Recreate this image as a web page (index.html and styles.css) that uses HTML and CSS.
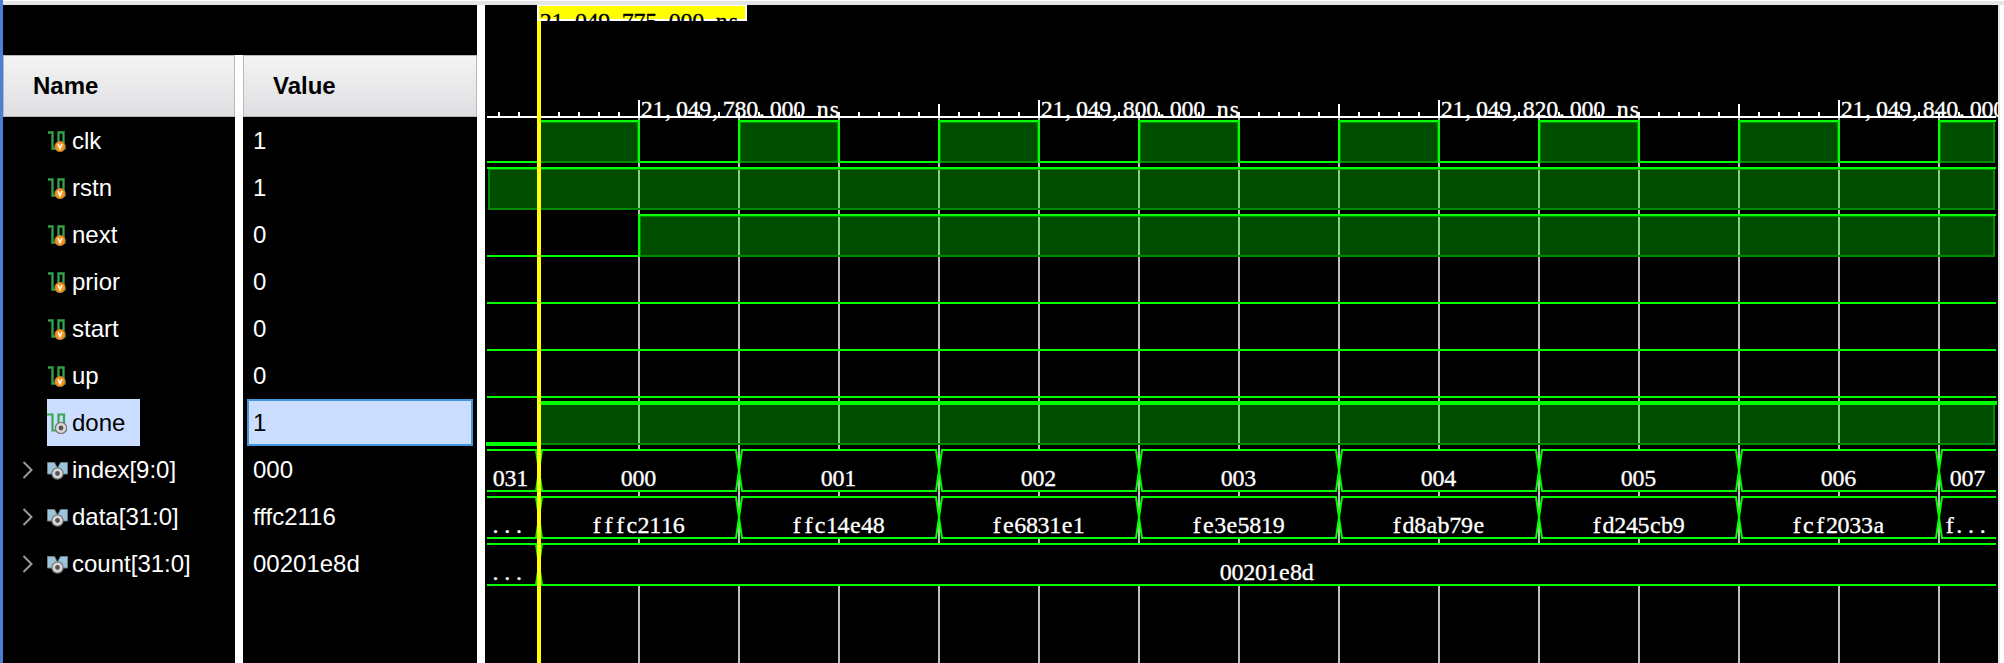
FILE: index.html
```
<!DOCTYPE html>
<html lang="en">
<head>
<meta charset="utf-8">
<title>Waveform</title>
<link rel="stylesheet" href="styles.css">
</head>
<body>
<svg class="defs" width="0" height="0">
  <symbol id="sig" viewBox="0 0 20 22">
    <path d="M1 2.5H5.5V18.5H11.5V2.5H16.5V18.5H18.5" fill="none" stroke="#1f6b2e" stroke-width="2.8"/>
    <path d="M1 2.5H5.5V18.5H11.5V2.5H16.5V18.5H18.5" fill="none" stroke="#35a24b" stroke-width="1.4"/>
  </symbol>
  <symbol id="input" viewBox="0 0 20 22">
    <use href="#sig" width="20" height="22"/>
    <circle cx="13" cy="16.5" r="5.2" fill="#f7941d" stroke="#a5733c" stroke-width="1"/>
    <path d="M11 14L13 18.6L15 14" fill="none" stroke="#fff" stroke-width="1.5"/>
  </symbol>
  <symbol id="output" viewBox="0 0 20 22">
    <path d="M0 2.5H5.5V18.5H11.5V2.5H17V18.5H20" fill="none" stroke="#3aa650" stroke-width="2.2"/>
    <circle cx="14" cy="16" r="5.6" fill="#d8d8d8" stroke="#777" stroke-width="1.2"/>
    <circle cx="14" cy="16" r="2.4" fill="#555"/>
  </symbol>
  <symbol id="bus" viewBox="0 0 21 20">
    <path d="M.5 2.5H7.5L10.5 8L13.5 2.5H20.5V14H.5Z" fill="#9cc5db" stroke="#6a7f8a" stroke-width="1"/>
    <path d="M8 1H13L10.5 7Z" fill="#000"/>
    <circle cx="10.5" cy="13.5" r="5.6" fill="#d8d8d8" stroke="#777" stroke-width="1.2"/>
    <circle cx="10.5" cy="13.5" r="2.4" fill="#555"/>
  </symbol>
  <symbol id="arrow" viewBox="0 0 12 18">
    <path d="M1.5 1L9.5 9L1.5 17" fill="none" stroke="#9a9a9a" stroke-width="2"/>
  </symbol>
</svg>
<div class="window">
  <div class="topbar"></div>
  <div class="panes">
    <section class="column names">
      <header class="head">Name</header>
      <ul class="list">
        <li class="row"><span class="item"><svg class="icon"><use href="#input"/></svg>clk</span></li>
        <li class="row"><span class="item"><svg class="icon"><use href="#input"/></svg>rstn</span></li>
        <li class="row"><span class="item"><svg class="icon"><use href="#input"/></svg>next</span></li>
        <li class="row"><span class="item"><svg class="icon"><use href="#input"/></svg>prior</span></li>
        <li class="row"><span class="item"><svg class="icon"><use href="#input"/></svg>start</span></li>
        <li class="row"><span class="item"><svg class="icon"><use href="#input"/></svg>up</span></li>
        <li class="row"><span class="item selected"><svg class="icon"><use href="#output"/></svg>done</span></li>
        <li class="row"><svg class="arrow"><use href="#arrow"/></svg><span class="item"><svg class="icon bus"><use href="#bus"/></svg>index[9:0]</span></li>
        <li class="row"><svg class="arrow"><use href="#arrow"/></svg><span class="item"><svg class="icon bus"><use href="#bus"/></svg>data[31:0]</span></li>
        <li class="row"><svg class="arrow"><use href="#arrow"/></svg><span class="item"><svg class="icon bus"><use href="#bus"/></svg>count[31:0]</span></li>
      </ul>
    </section>
    <section class="column values">
      <header class="head">Value</header>
      <ul class="list">
        <li class="row"><span class="value">1</span></li>
        <li class="row"><span class="value">1</span></li>
        <li class="row"><span class="value">0</span></li>
        <li class="row"><span class="value">0</span></li>
        <li class="row"><span class="value">0</span></li>
        <li class="row"><span class="value">0</span></li>
        <li class="row"><span class="value selected">1</span></li>
        <li class="row"><span class="value">000</span></li>
        <li class="row"><span class="value">fffc2116</span></li>
        <li class="row"><span class="value">00201e8d</span></li>
      </ul>
    </section>
    <svg class="wave" id="wave" viewBox="485 5 1513 658"></svg>
    <div class="edge"></div>
  </div>
</div>
<script src="wave.js"></script>
</body>
</html>
```
FILE: styles.css
```
body {
  margin: 0;
  background: #fff;
  font-family: "Liberation Sans", Arial, sans-serif;
  font-size: 24px;
  color: #fff;
}
.defs { position: absolute; }
.window {
  box-sizing: border-box;
  width: 2004px;
  height: 663px;
  border-left: 3px solid #4a7fd4;
  overflow: hidden;
  display: flex;
  flex-direction: column;
}
.topbar {
  height: 4px;
  flex: none;
  background: #e5e5e5;
  border-top: 1px solid #fff;
}
.panes {
  flex: 1;
  display: flex;
  min-height: 0;
}
.column {
  flex: none;
  box-sizing: border-box;
  background: #000;
  padding-top: 50px;
}
.names { width: 232px; }
/* The gap between the two header cells starts below the black band. */
.values {
  width: 242px;
  border-left: 8px solid;
  border-image: linear-gradient(#000 50px, #fff 50px) 0 0 0 8;
}
.head {
  box-sizing: border-box;
  height: 62px;
  border: 1px solid #b8b8b8;
  background: linear-gradient(#f4f4f4, #dfdfe3);
  color: #000;
  font-weight: bold;
  line-height: 59px;
  padding-left: 29px;
}
.list {
  list-style: none;
  margin: 0;
  padding: 0;
}
.row {
  height: 47px;
  display: flex;
  align-items: center;
}
.names .row { padding-left: 19px; }
.item {
  box-sizing: border-box;
  height: 47px;
  line-height: 45px;
  margin-left: auto;
  width: 188px;
  display: flex;
  align-items: center;
}
.item.selected {
  width: 93px;
  margin-left: 25px;
  background: #ccdeff;
  color: #000;
}
.icon {
  width: 20px;
  height: 22px;
  margin-right: 5px;
  flex: none;
}
.icon.bus {
  width: 21px;
  height: 20px;
  margin-right: 4px;
}
.arrow {
  width: 12px;
  height: 18px;
  flex: none;
}
.value {
  box-sizing: border-box;
  width: 226px;
  height: 47px;
  line-height: 43px;
  margin-left: 4px;
  border: 2px solid transparent;
  padding-left: 4px;
}
.value.selected {
  background: #ccdeff;
  border-color: #4497d8;
  color: #000;
}
.wave {
  flex: none;
  width: 1513px;
  height: 658px;
  margin-left: 8px;
  background: #000;
}
.wave text {
  font-family: "Liberation Serif", serif;
  font-size: 24px;
  text-anchor: middle;
  fill: #fff;
  stroke: #fff;
  stroke-width: 0.3px;
}
.wave .cursor-time { fill: #000; stroke: #000; }
.edge {
  width: 2px;
  background: #e5e5e5;
}
```
FILE: wave.js
```
const NS = "http://www.w3.org/2000/svg";
const wave = document.getElementById("wave");
const LEFT = 487, RIGHT = 1996, CURSOR = 539, HALF = 100;
const GREEN = "#00ff00", FILL = "#004d00", RIM = "#008c00";

function add(tag, attrs, parent = wave) {
  const el = document.createElementNS(NS, tag);
  for (const k in attrs) el.setAttribute(k, attrs[k]);
  parent.appendChild(el);
  return el;
}
function rect(x, y, width, height, fill, extra) {
  return add("rect", { x, y, width, height, fill, ...extra });
}
// Fixed-pitch character cells; punctuation sits at the left of its cell.
const PITCH = 11.73;
function cells(str, start, y, cls, parent) {
  const xs = [...str].map((c, i) => (start + i * PITCH + (",.".includes(c) ? 3.5 : 5.7)).toFixed(2));
  const t = add("text", { x: xs.join(" "), y }, parent);
  if (cls) t.setAttribute("class", cls);
  t.textContent = str;
}

// Grid lines
for (let x = 638; x < RIGHT; x += HALF) rect(x, 118, 2, 545, "#bdbdbd");

// Ruler
rect(LEFT, 116, RIGHT - LEFT, 2, "#fff");
for (let i = 0; 498 + i * 20 < RIGHT; i++) {
  const x = 498 + i * 20;
  const k = (x - 638) / 100;
  const h = k % 4 === 0 ? 16 : k % 4 === 3 ? 12 : 4;
  rect(x, 116 - h, 2, h, "#fff");
}
["780", "800", "820", "840"].forEach((n, i) =>
  cells("21,049," + n + ".000 ns", 641 + i * 400, 117));

function high(x1, x2, top, opt = {}) {
  rect(x1, top, x2 - x1, 42, FILL);
  for (let x = 638; x < x2; x += HALF)
    if (x > x1 && x < x2 - 2) rect(x, top, 2, 42, "#84d084");
  rect(x1, top + 41, x2 - x1, 2, RIM);
  rect(x1, top + 2, x2 - x1, 1, RIM);
  if (opt.left) rect(x1, top + 2, 2, 41, RIM);
  if (opt.right) rect(x2 - 2, top + 2, 2, 41, RIM);
}

// clk
rect(LEFT, 161, CURSOR - LEFT, 2, GREEN);
for (let x = 538; x < RIGHT; x += 200) {
  const end = Math.min(x + HALF, RIGHT - 1);
  high(x + 1, end + (end < RIGHT - 1 ? 1 : 0), 120, { left: x > 538, right: true });
  rect(x, 120, Math.min(x + HALF + 2, RIGHT) - x, 2, GREEN);
  rect(x, 120, 2, 43, GREEN);
  if (x + HALF < RIGHT) {
    rect(x + HALF, 120, 2, 43, GREEN);
    rect(x + HALF, 161, HALF, 2, GREEN);
  }
}
// rstn
high(488, 1995, 167, { left: true, right: true });
rect(LEFT, 167, RIGHT - LEFT, 2, GREEN);
// next
high(639, 1995, 214, { left: true, right: true });
rect(LEFT, 255, 151, 2, GREEN);
rect(638, 214, 2, 43, GREEN);
rect(638, 214, RIGHT - 638, 2, GREEN);
// prior, start, up
[302, 349, 396].forEach(y => rect(LEFT, y, RIGHT - LEFT, 2, GREEN));
// done
high(CURSOR, 1995, 402, { right: true });
rect(486, 442, 53, 4, GREEN);
rect(CURSOR, 401, 1997 - CURSOR, 4, GREEN);

// Buses
function bus(top, labels, start, until) {
  const edges = [];
  for (let x = 539; x < until; x += 200) edges.push(x);
  rect(LEFT, top, RIGHT - LEFT, 43, "#000");
  const bounds = [LEFT - 4, ...edges, RIGHT + 4];
  for (const x of edges)
    if (x > 539) rect(x - 1, top, 2, 43, "#bdbdbd");
  for (let i = 0; i < bounds.length - 1; i++) {
    const a = bounds[i] + 4, b = bounds[i + 1] - 4;
    rect(a, top, b - a, 2, GREEN);
    rect(a, top + 41, b - a, 2, GREEN);
  }
  for (const x of edges)
    add("path", {
      d: `M${x - 4} ${top + 1}h1L${x + 3} ${top + 42}h1M${x + 4} ${top + 1}h-1L${x - 3} ${top + 42}h-1`,
      fill: "none", stroke: GREEN, "stroke-width": 2
    });
  labels.forEach((s, i) => cells(s, start[i], top + 37));
}
const idx = ["031"], idxX = [493];
for (let i = 0; i < 7; i++) { idx.push("00" + i); idxX.push(621 + i * 200); }
idx.push("007"); idxX.push(1950);
bus(449, idx, idxX, RIGHT);

const words = ["fffc2116", "ffc14e48", "fe6831e1", "fe3e5819", "fd8ab79e", "fd245cb9", "fcf2033a"];
bus(496, ["...", ...words, "f..."], [492, ...words.map((_, i) => 591 + i * 200), 1944], RIGHT);
bus(543, ["...", "00201e8d"], [492, 1220], 600);

// Cursor and its clipped time label
rect(537, 5, 4, 658, "#ffff00");
rect(537, 5, 210, 16, "#fff");
rect(539, 6, 206, 13, "#ffff00");
const clip = add("clipPath", { id: "flag" });
add("rect", { x: 539, y: 5, width: 206, height: 16 }, clip);
const flag = add("g", { "clip-path": "url(#flag)" });
cells("21,049,775.000 ns", 540, 29, "cursor-time", flag);
```
